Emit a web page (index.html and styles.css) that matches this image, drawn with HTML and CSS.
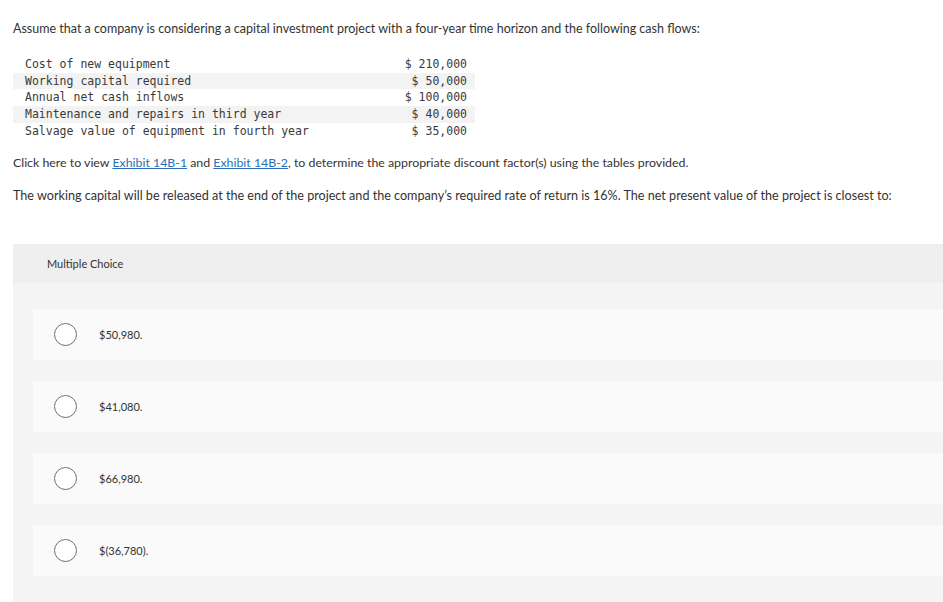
FILE: index.html
```html
<!DOCTYPE html>
<html>
<head>
<meta charset="utf-8">
<link rel="stylesheet" href="styles.css">
</head>
<body>
<div class="question">
  <p class="intro">Assume that a company is considering a capital investment project with a four-year time horizon and the following cash flows:</p>
  <table class="flows">
    <tr><td class="label">Cost of new equipment</td><td class="amt">$ 210,000</td></tr>
    <tr class="alt"><td class="label">Working capital required</td><td class="amt">$ 50,000</td></tr>
    <tr><td class="label">Annual net cash inflows</td><td class="amt">$ 100,000</td></tr>
    <tr class="alt"><td class="label">Maintenance and repairs in third year</td><td class="amt">$ 40,000</td></tr>
    <tr><td class="label">Salvage value of equipment in fourth year</td><td class="amt">$ 35,000</td></tr>
  </table>
  <p class="click">Click here to view <a href="#">Exhibit 14B-1</a> and <a href="#">Exhibit 14B-2</a>, to determine the appropriate discount factor(s) using the tables provided.</p>
  <p class="stem">The working capital will be released at the end of the project and the company’s required rate of return is 16%. The net present value of the project is closest to:</p>
</div>
<div class="choices">
  <div class="choices-head">Multiple Choice</div>
  <div class="options">
    <div class="option"><span class="radio"></span><span class="opt-text">$50,980.</span></div>
    <div class="option"><span class="radio"></span><span class="opt-text">$41,080.</span></div>
    <div class="option"><span class="radio"></span><span class="opt-text">$66,980.</span></div>
    <div class="option"><span class="radio"></span><span class="opt-text">$(36,780).</span></div>
  </div>
</div>
</body>
</html>
```
FILE: styles.css
```css
html, body {
  margin: 0;
  padding: 0;
  background: #ffffff;
}
body {
  font-family: Lato, "Liberation Sans", sans-serif;
  color: #333333;
  width: 943px;
  overflow: hidden;
}
.question {
  padding: 21px 0 0 13px;
}
.question p {
  margin: 0;
  font-size: 12.5px;
  line-height: 16px;
}
.question .stem {
  font-size: 12.6px;
}
.question .click {
  font-size: 12.35px;
}
.flows {
  border-collapse: collapse;
  margin-top: 19px;
  width: 462px;
  font-family: "DejaVu Sans Mono", "Liberation Mono", monospace;
  font-size: 11.5px;
  color: #3a3a3a;
}
.flows td {
  padding: 0;
  height: 16.7px;
  line-height: 16.7px;
  white-space: pre;
}
.flows .label {
  padding-left: 12px;
}
.flows .amt {
  text-align: right;
  padding-right: 8px;
}
.flows .alt td {
  background: #f3f3f3;
}
.click {
  margin-top: 15px !important;
}
.stem {
  margin-top: 17px !important;
}
.click a {
  color: #2d6fb7;
  text-decoration: underline;
}
.choices {
  margin: 40px 0 0 13px;
  background: #f4f4f4;
  padding-bottom: 30px;
}
.choices-head {
  background: #efefef;
  height: 39px;
  line-height: 40px;
  padding-left: 34px;
  font-size: 11px;
  color: #333;
}
.options {
  display: flex;
  flex-direction: column;
  gap: 21px;
  padding: 26px 0 0 20px;
}
.option {
  display: flex;
  align-items: center;
  height: 51px;
  background: #fafafa;
  padding-left: 21px;
}
.radio {
  border: 1.5px solid #707070;
  border-radius: 50%;
  box-sizing: border-box;
  width: 23px;
  height: 23px;
  background: #fff;
}
.opt-text {
  margin-left: 22px;
  font-size: 11px;
  color: #333;
}
```
